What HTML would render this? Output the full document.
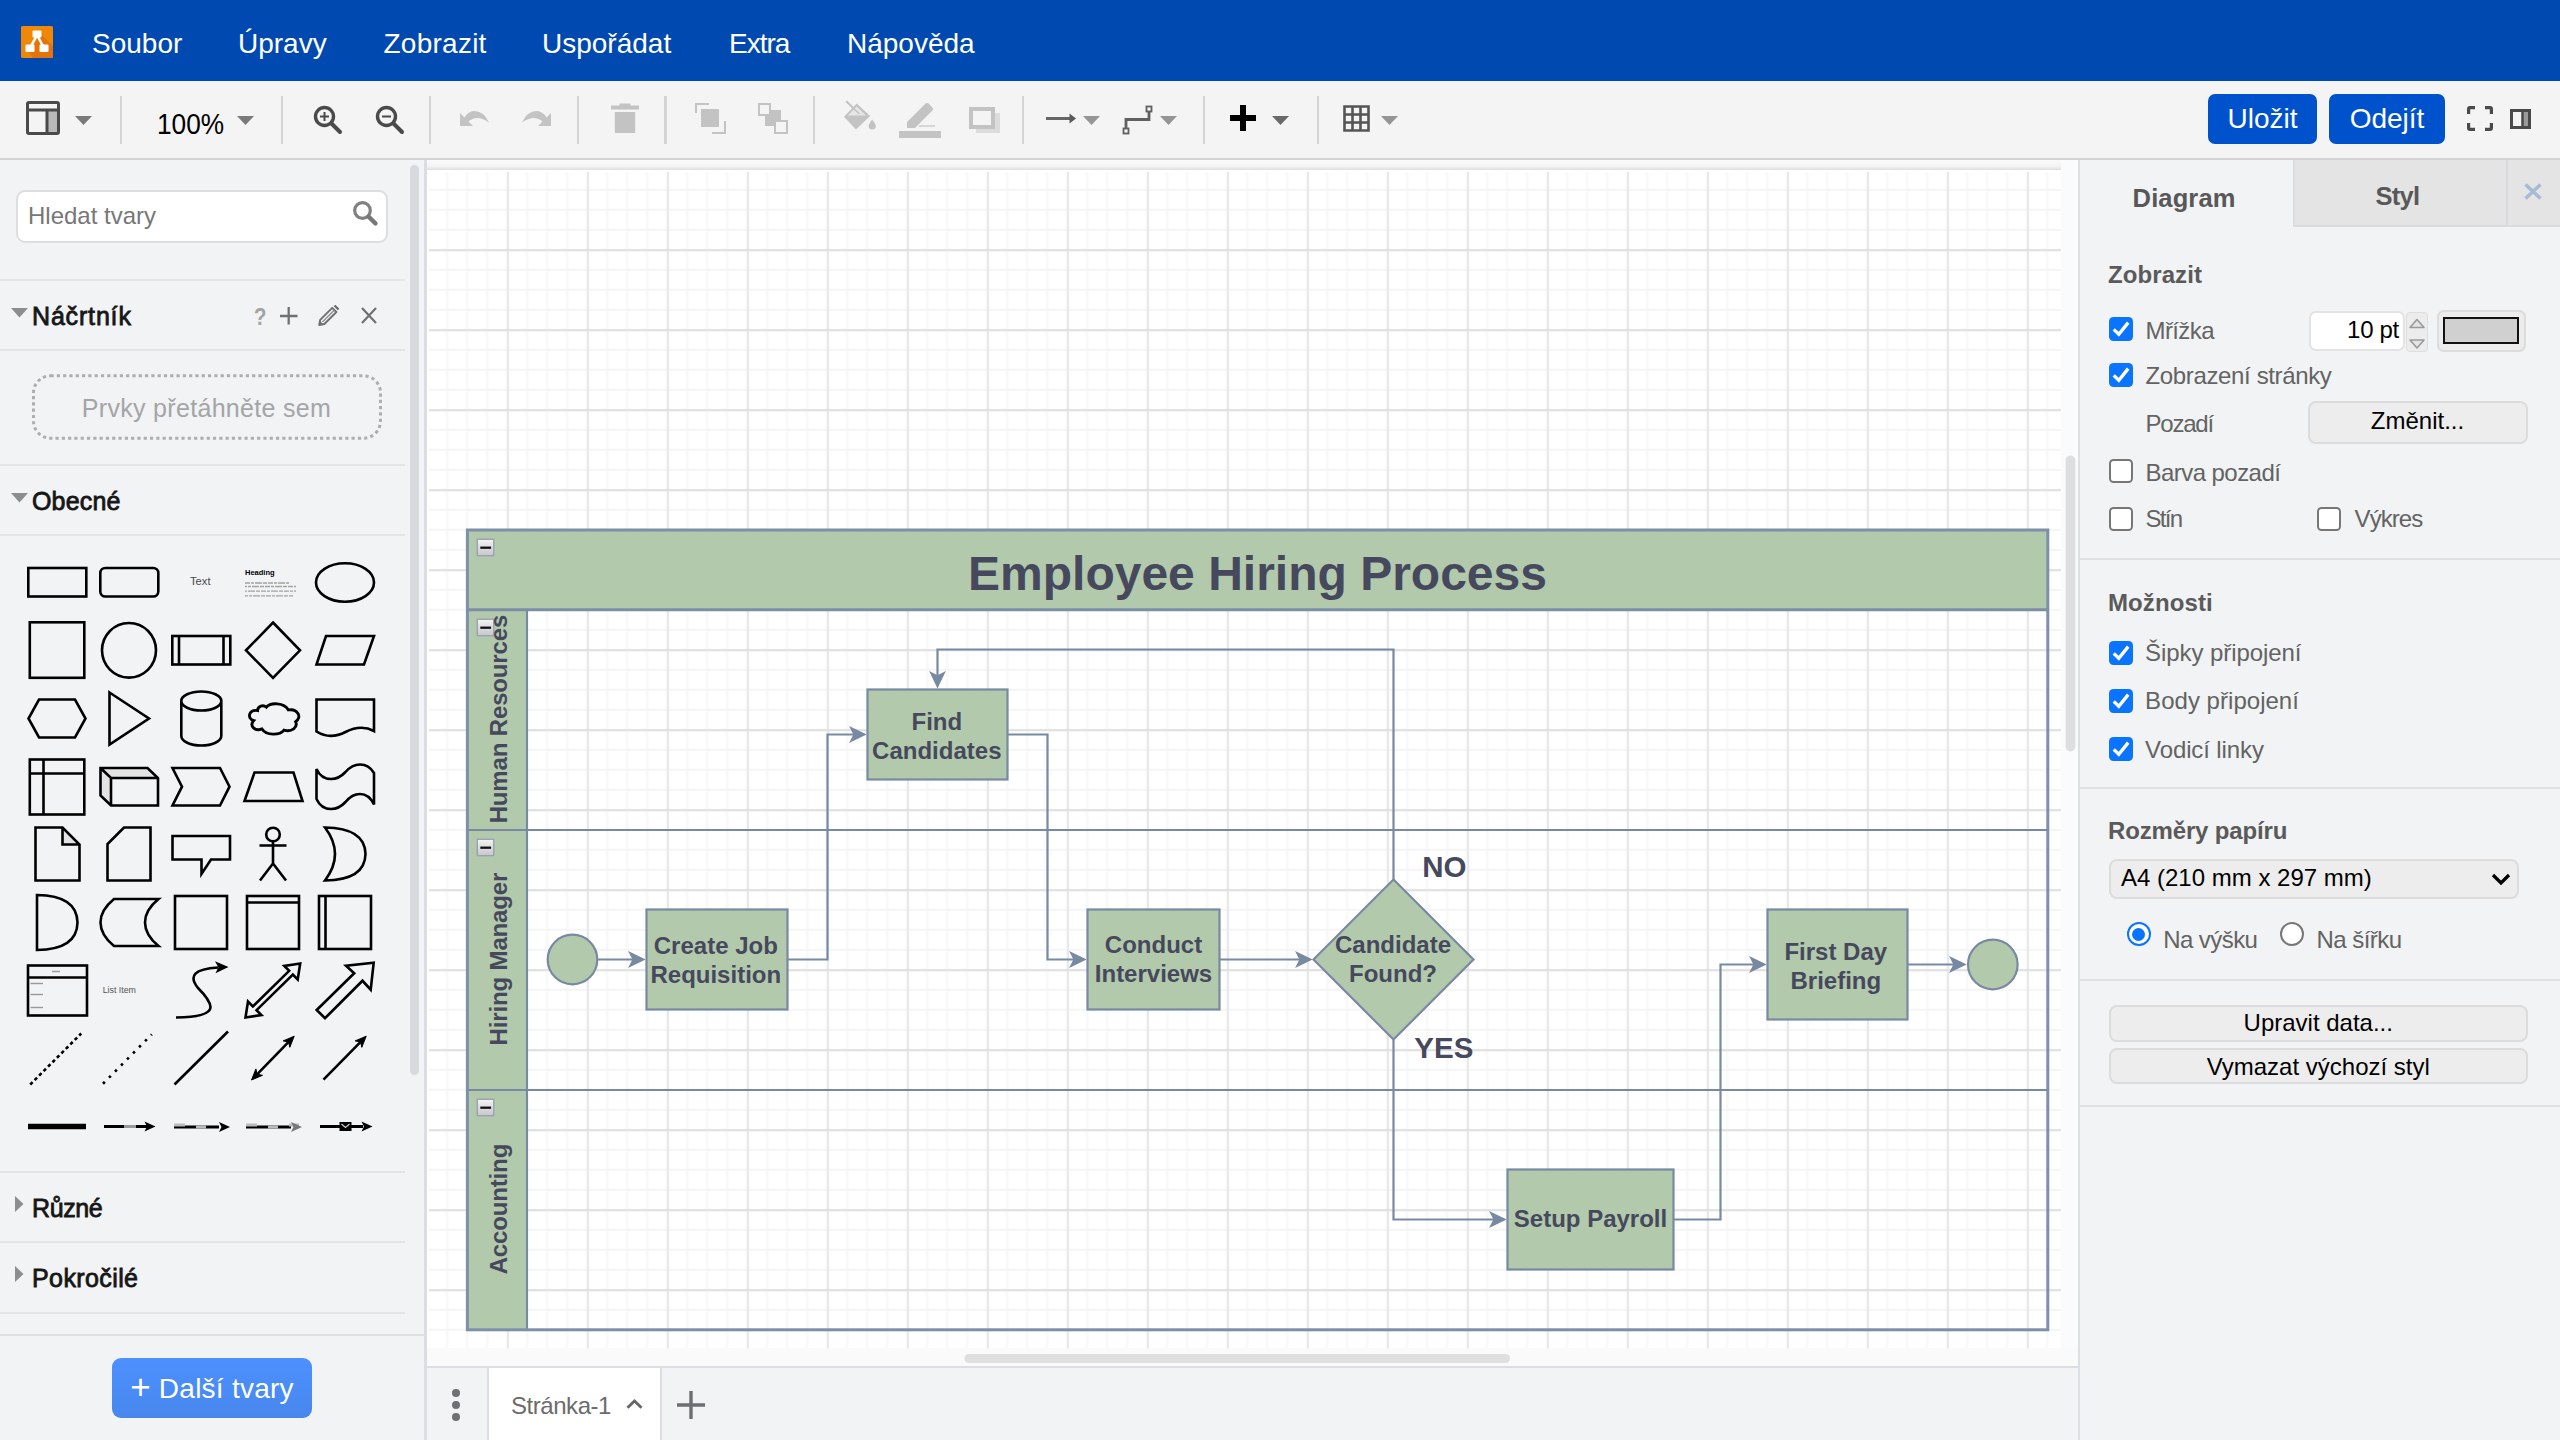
<!DOCTYPE html>
<html lang="cs"><head><meta charset="utf-8"><title>draw.io</title>
<style>
*{box-sizing:border-box;margin:0;padding:0}
html,body{width:2560px;height:1440px;overflow:hidden;background:#f1f3f4;font-family:"Liberation Sans",sans-serif;}
.abs{position:absolute}
#menubar{position:absolute;left:0;top:0;width:2560px;height:81px;background:#0049b0}
#menubar .mi{position:absolute;top:26.7px;font-size:28px;line-height:34px;color:#fff;white-space:nowrap}
#toolbar{position:absolute;left:0;top:81px;width:2560px;height:79px;background:#f4f4f4;border-bottom:2px solid #d2d2d2}
#toolbar .sep{position:absolute;top:15px;width:2px;height:48px;background:#d4d4d4}
#toolbar svg{position:absolute;overflow:visible}
.btn{position:absolute;top:13px;height:50px;border-radius:7px;background:#0052cc;color:#fff;font-size:28px;line-height:50px;text-align:center}
#sidebar{position:absolute;left:0;top:160px;width:424px;height:1280px;background:#f1f3f4;overflow:hidden}
#split{position:absolute;left:424px;top:160px;width:3px;height:1280px;background:#dcdde2}
#canvas{position:absolute;left:427px;top:160px;width:1651px;height:1207px;background:#fbfbfb;overflow:hidden}
#footer{position:absolute;left:427px;top:1366px;width:1651px;height:74px;background:#f1f3f4;border-top:2px solid #dcdee3}
#fsplit{position:absolute;left:2078px;top:160px;width:2px;height:1280px;background:#dcdfe4}
#format{position:absolute;left:2080px;top:160px;width:480px;height:1280px;background:#f1f3f4;overflow:hidden}
</style></head><body>
<div id="menubar">
<svg class="abs" style="left:21px;top:26px" width="32" height="32" viewBox="0 0 32 32">
<rect x="0" y="0" width="32" height="32" rx="1.5" fill="#f08705"/>
<path d="M20 8 L32 20 L32 30.5 Q32 32 30.5 32 L12 32 L8 26 Z" fill="#df6c0c" opacity=".75"/>
<path d="M16 9 L9 22 M16 9 L23 22" stroke="#fff" stroke-width="2.6" fill="none"/>
<rect x="11.5" y="4.5" width="9" height="7" rx="1" fill="#fff"/>
<rect x="4.5" y="18.5" width="9" height="7.5" rx="1" fill="#fff"/>
<rect x="18.5" y="18.5" width="9" height="7.5" rx="1" fill="#fff"/>
</svg>
<div class="mi" style="left:92px">Soubor</div>
<div class="mi" style="left:238px">Úpravy</div>
<div class="mi" style="left:383.5px;letter-spacing:.25px">Zobrazit</div>
<div class="mi" style="left:542px">Uspořádat</div>
<div class="mi" style="left:729px;letter-spacing:-1px">Extra</div>
<div class="mi" style="left:847px">Nápověda</div>
</div>
<div id="toolbar">
<!-- view icon -->
<svg style="left:26px;top:20px" width="34" height="34" viewBox="0 0 34 34"><rect x="21" y="9" width="11" height="23" fill="#b9b9b9"/><rect x="1.5" y="1.5" width="31" height="31" rx="1.5" fill="none" stroke="#4a4a4a" stroke-width="3"/><path d="M1.5 9 H32.5 M21 9 V32.5" stroke="#4a4a4a" stroke-width="3" fill="none"/></svg>
<svg style="left:75px;top:35px" width="17" height="9" viewBox="0 0 17 9"><path d="M0 0 H17 L8.5 9 Z" fill="#7a7a7a"/></svg>
<div class="sep" style="left:120px"></div>
<div class="abs" style="left:157px;top:25px;font-size:29px;line-height:36px;color:#000;transform:scaleX(.905);transform-origin:0 0">100%</div>
<svg style="left:237px;top:35px" width="17" height="9" viewBox="0 0 17 9"><path d="M0 0 H17 L8.5 9 Z" fill="#7a7a7a"/></svg>
<div class="sep" style="left:281px"></div>
<!-- zoom in -->
<svg style="left:313px;top:24px" width="29" height="29" viewBox="0 0 29 29"><circle cx="11.5" cy="11.5" r="9" fill="none" stroke="#4a4a4a" stroke-width="3.4"/><path d="M18.5 18.5 L27 27" stroke="#4a4a4a" stroke-width="4" stroke-linecap="round"/><path d="M7 11.5 H16 M11.5 7 V16" stroke="#4a4a4a" stroke-width="2"/></svg>
<!-- zoom out -->
<svg style="left:375px;top:24px" width="29" height="29" viewBox="0 0 29 29"><circle cx="11.5" cy="11.5" r="9" fill="none" stroke="#4a4a4a" stroke-width="3.4"/><path d="M18.5 18.5 L27 27" stroke="#4a4a4a" stroke-width="4" stroke-linecap="round"/><path d="M7 11.5 H16" stroke="#4a4a4a" stroke-width="2"/></svg>
<div class="sep" style="left:429px"></div>
<!-- undo -->
<svg style="left:460px;top:29px" width="30" height="17" viewBox="0 0 30 17"><path d="M0 3 V16 H13 L8.5 11.5 Q17 4 29 12.5 Q24 1 14 1 Q8 1.5 4.5 7.5 Z" fill="#c3c3c3"/></svg>
<!-- redo -->
<svg style="left:521px;top:29px" width="30" height="17" viewBox="0 0 30 17"><g transform="translate(30,0) scale(-1,1)"><path d="M0 3 V16 H13 L8.5 11.5 Q17 4 29 12.5 Q24 1 14 1 Q8 1.5 4.5 7.5 Z" fill="#c3c3c3"/></g></svg>
<div class="sep" style="left:577px"></div>
<!-- trash -->
<svg style="left:611px;top:22px" width="28" height="31" viewBox="0 0 28 31"><path d="M0 2.500 H8.500 V0.500 H19.500 V2.500 H28 V6.400 H0 Z M3.800 9 H24.200 V30 H3.800 Z" fill="#c3c3c3"/></svg>
<div class="sep" style="left:664px;width:3px"></div>
<!-- to front -->
<svg style="left:695px;top:22px" width="31" height="31" viewBox="0 0 31 31"><path d="M1 10 V1 H14 M17 30 H30 V18" fill="none" stroke="#c3c3c3" stroke-width="2"/><rect x="6" y="6" width="18" height="18" fill="#c3c3c3"/></svg>
<!-- to back -->
<svg style="left:758px;top:22px" width="30" height="31" viewBox="0 0 30 31"><rect x="7" y="7" width="16" height="16" fill="#c3c3c3"/><rect x="1" y="1" width="11" height="11" fill="#f4f4f4" stroke="#c3c3c3" stroke-width="2"/><rect x="17" y="18" width="12" height="12" fill="#f4f4f4" stroke="#c3c3c3" stroke-width="2"/></svg>
<div class="sep" style="left:813px"></div>
<!-- fill -->
<svg style="left:843px;top:20px" width="34" height="31" viewBox="0 0 34 31"><path d="M3.200 0.200 L15.100 11.500" stroke="#c3c3c3" stroke-width="2"/><path d="M13.700 2.400 L27.100 15 L13 28.400 L1 15.700 Z" fill="#c3c3c3"/><path d="M13.700 5.600 L23 14.400 H4.800 Z" fill="#ececec" opacity=".85"/><path d="M8.500 5.500 L16.500 13" stroke="#c3c3c3" stroke-width="1.600"/><path d="M29.200 18.500 Q32.800 23 32.800 25 A3.600 3.600 0 0 1 25.600 25 Q25.600 23 29.200 18.500 Z" fill="#c3c3c3"/></svg>
<!-- line color -->
<svg style="left:899px;top:20px" width="42" height="37" viewBox="0 0 42 37"><rect x="0" y="30" width="42" height="7" fill="#c3c3c3"/><path d="M8 27 V21 L26 3 Q28 1 30 3 L33 6 Q35 8 33 10 L16 27 Z" fill="#c3c3c3"/><path d="M20 25 H36" stroke="#d6d6d6" stroke-width="2"/></svg>
<!-- shadow -->
<svg style="left:969px;top:26px" width="31" height="26" viewBox="0 0 31 26"><rect x="7" y="6" width="24" height="20" fill="#dcdcdc"/><rect x="2" y="2" width="22" height="18" fill="#f4f4f4" stroke="#c3c3c3" stroke-width="4"/></svg>
<div class="sep" style="left:1022px"></div>
<!-- connection -->
<svg style="left:1046px;top:28px" width="30" height="18" viewBox="0 0 30 18"><path d="M0 9.500 H25" stroke="#666" stroke-width="3"/><path d="M23.500 4.500 L30 9.500 L23.500 14.500 Z" fill="#5a5a5a"/></svg>
<svg style="left:1083px;top:35px" width="17" height="9" viewBox="0 0 17 9"><path d="M0 0 H17 L8.5 9 Z" fill="#959595"/></svg>
<!-- waypoints -->
<svg style="left:1122px;top:24px" width="31" height="31" viewBox="0 0 31 31"><path d="M4 23 V14.500 H27 V7" fill="none" stroke="#606060" stroke-width="2.8"/><rect x="1.5" y="23.500" width="5" height="5" fill="#f4f4f4" stroke="#606060" stroke-width="1.8"/><rect x="24.5" y="1.500" width="5" height="5" fill="#f4f4f4" stroke="#606060" stroke-width="1.8"/></svg>
<svg style="left:1160px;top:35px" width="17" height="9" viewBox="0 0 17 9"><path d="M0 0 H17 L8.5 9 Z" fill="#959595"/></svg>
<div class="sep" style="left:1203px"></div>
<!-- plus -->
<svg style="left:1230px;top:24px" width="26" height="26" viewBox="0 0 26 26"><path d="M0 13 H26 M13 0 V26" stroke="#000" stroke-width="6"/></svg>
<svg style="left:1272px;top:35px" width="17" height="9" viewBox="0 0 17 9"><path d="M0 0 H17 L8.5 9 Z" fill="#6a6a6a"/></svg>
<div class="sep" style="left:1317px"></div>
<!-- table -->
<svg style="left:1343px;top:24px" width="27" height="27" viewBox="0 0 27 27"><path d="M1.500 1.500 H25.500 V25.500 H1.500 Z M1.500 9.500 H25.500 M1.500 17.500 H25.500 M9.500 1.500 V25.500 M17.500 1.500 V25.500" fill="none" stroke="#555" stroke-width="2.6"/></svg>
<svg style="left:1381px;top:35px" width="17" height="9" viewBox="0 0 17 9"><path d="M0 0 H17 L8.5 9 Z" fill="#959595"/></svg>
<!-- right buttons -->
<div class="btn" style="left:2208px;width:109px">Uložit</div>
<div class="btn" style="left:2329px;width:116px">Odejít</div>
<svg style="left:2467px;top:25px" width="26" height="25" viewBox="0 0 26 25"><path d="M1.600 8 V3 Q1.600 1.600 3 1.600 H8 M18 1.600 H23 Q24.400 1.600 24.400 3 V8 M24.400 17 V22 Q24.400 23.400 23 23.400 H18 M8 23.400 H3 Q1.600 23.400 1.600 22 V17" fill="none" stroke="#4a4a4a" stroke-width="3.200"/></svg>
<svg style="left:2510px;top:28px" width="21" height="20" viewBox="0 0 21 20"><rect x="12" y="1" width="8" height="18" fill="#9a9a9a"/><rect x="1.500" y="1.500" width="18" height="17" fill="none" stroke="#4a4a4a" stroke-width="3"/><path d="M12.500 1 V19" stroke="#4a4a4a" stroke-width="2.500"/></svg>
</div>
<div id="sidebar">
<div class="abs" style="left:410px;top:5px;width:9px;height:910px;border-radius:5px;background:#d8d9dc"></div>
<div class="abs" style="left:16px;top:30px;width:372px;height:53px;background:#fff;border:2px solid #dddee0;border-radius:9px"></div>
<div class="abs" style="left:28px;top:41px;font-size:24px;line-height:30px;color:#777;letter-spacing:0px">Hledat tvary</div>
<svg class="abs" style="left:352px;top:40px" width="27" height="27" viewBox="0 0 27 27"><circle cx="10.500" cy="10.500" r="7.800" fill="none" stroke="#808080" stroke-width="3.200"/><path d="M16.500 16.500 L23.500 23.500" stroke="#777" stroke-width="4.400" stroke-linecap="round"/></svg>
<div class="abs" style="left:0;top:119px;width:405px;height:2px;background:#e3e4e6"></div>
<svg class="abs" style="left:11px;top:148px" width="17" height="10" viewBox="0 0 17 10"><path d="M0 0 H17 L8.500 9.500 Z" fill="#8d8d8d"/></svg>
<div class="abs" style="left:32px;top:140px;font-size:25px;line-height:32px;color:#161616;-webkit-text-stroke:.8px #161616;letter-spacing:0.83px">Náčrtník</div>
<div class="abs" style="left:253px;top:140.500px;font-size:24px;line-height:32px;font-weight:bold;color:#a3a3a3;transform:scaleX(.85);transform-origin:50% 50%">?</div>
<svg class="abs" style="left:280px;top:147px" width="18" height="18" viewBox="0 0 18 18"><path d="M0 9 H17.500 M8.700 0 V17.500" stroke="#707070" stroke-width="2.300"/></svg>
<svg class="abs" style="left:317px;top:144px" width="23" height="23" viewBox="0 0 23 23"><path d="M2.200 21 L3.200 15.800 L15.200 3.800 L19.400 8 L7.400 20 Z" fill="none" stroke="#707070" stroke-width="1.900" stroke-linejoin="round"/><path d="M2.200 21 L3 17 L6.200 20.200 Z" fill="#707070"/><path d="M5.500 18 L17.300 6" stroke="#8a8a8a" stroke-width="1.300"/><path d="M16.800 2.300 L18.300 0.800 L22.300 4.800 L20.800 6.300 Z" fill="#666"/></svg>
<svg class="abs" style="left:361px;top:147px" width="16" height="17" viewBox="0 0 16 17"><path d="M1 1 L15 16 M15 1 L1 16" stroke="#707070" stroke-width="2.200"/></svg>
<div class="abs" style="left:0;top:189px;width:405px;height:2px;background:#e3e4e6"></div>
<svg class="abs" style="left:30px;top:212px" width="356" height="70" viewBox="0 0 356 70"><rect x="3.5" y="3.8" width="347" height="62.4" rx="17" fill="none" stroke="#aeaeb0" stroke-width="3" stroke-dasharray="3.2 3.1"/></svg>
<div class="abs" style="left:32px;top:232px;width:349px;text-align:center;font-size:25px;line-height:32px;color:#a4a5a7;letter-spacing:.31px">Prvky přetáhněte sem</div>
<div class="abs" style="left:0;top:304px;width:405px;height:2px;background:#e3e4e6"></div>
<svg class="abs" style="left:11px;top:333px" width="17" height="10" viewBox="0 0 17 10"><path d="M0 0 H17 L8.500 9.500 Z" fill="#8d8d8d"/></svg>
<div class="abs" style="left:32px;top:325px;font-size:25px;line-height:32px;color:#161616;-webkit-text-stroke:.8px #161616;letter-spacing:0.17px">Obecné</div>
<div class="abs" style="left:0;top:374px;width:405px;height:2px;background:#e3e4e6"></div>
<svg class="abs" style="left:21px;top:388px" width="72" height="68" viewBox="0 0 72 68"><rect x="7.3" y="20" width="58" height="28.500" stroke="#000" stroke-width="2.6" fill="none" stroke-linejoin="miter"/></svg>
<svg class="abs" style="left:93px;top:388px" width="72" height="68" viewBox="0 0 72 68"><rect x="7.300" y="20" width="58" height="28.500" rx="5" stroke="#000" stroke-width="2.6" fill="none" stroke-linejoin="miter"/></svg>
<svg class="abs" style="left:165px;top:388px" width="72" height="68" viewBox="0 0 72 68"><text x="35.300" y="37.400" font-size="11.200" text-anchor="middle" fill="#4a4a4a" font-family="Liberation Sans">Text</text></svg>
<svg class="abs" style="left:237px;top:388px" width="72" height="68" viewBox="0 0 72 68"><text x="8" y="27" font-size="7.500" font-weight="bold" fill="#000" font-family="Liberation Sans">Heading</text><g stroke="#a2a2a2" stroke-width="1.300" stroke-dasharray="5 1 3 1 7 1 4 1"><path d="M8 35 H52"/><path d="M8 38.500 H59" stroke-dashoffset="3"/><path d="M8 43.200 H59" stroke-dashoffset="7"/><path d="M8 47.800 H56" stroke-dashoffset="2"/></g></svg>
<svg class="abs" style="left:309px;top:388px" width="72" height="68" viewBox="0 0 72 68"><ellipse cx="36" cy="34.500" rx="29" ry="19.200" stroke="#000" stroke-width="2.6" fill="none" stroke-linejoin="miter"/></svg>
<svg class="abs" style="left:21px;top:456px" width="72" height="68" viewBox="0 0 72 68"><rect x="8.800" y="6.300" width="54.500" height="55.500" stroke="#000" stroke-width="2.6" fill="none" stroke-linejoin="miter"/></svg>
<svg class="abs" style="left:93px;top:456px" width="72" height="68" viewBox="0 0 72 68"><ellipse cx="36" cy="34.300" rx="27" ry="27.300" stroke="#000" stroke-width="2.6" fill="none" stroke-linejoin="miter"/></svg>
<svg class="abs" style="left:165px;top:456px" width="72" height="68" viewBox="0 0 72 68"><rect x="7.300" y="20" width="58" height="28.500" stroke="#000" stroke-width="2.6" fill="none" stroke-linejoin="miter"/><path d="M14 20 V48.500 M58.500 20 V48.500" stroke="#000" stroke-width="2.6" fill="none" stroke-linejoin="miter"/></svg>
<svg class="abs" style="left:237px;top:456px" width="72" height="68" viewBox="0 0 72 68"><path d="M36 6.500 L63 34.300 L36 62 L9 34.300 Z" stroke="#000" stroke-width="2.6" fill="none" stroke-linejoin="miter"/></svg>
<svg class="abs" style="left:309px;top:456px" width="72" height="68" viewBox="0 0 72 68"><path d="M17 20 H65 L55 48.500 H7.500 Z" stroke="#000" stroke-width="2.6" fill="none" stroke-linejoin="miter"/></svg>
<svg class="abs" style="left:21px;top:524px" width="72" height="68" viewBox="0 0 72 68"><path d="M18 15.500 H54 L64.500 34.500 L54 53.500 H18 L7.500 34.500 Z" stroke="#000" stroke-width="2.6" fill="none" stroke-linejoin="miter"/></svg>
<svg class="abs" style="left:93px;top:524px" width="72" height="68" viewBox="0 0 72 68"><path d="M16.500 8.500 L56 34.500 L16.500 60.500 Z" stroke="#000" stroke-width="2.6" fill="none" stroke-linejoin="miter"/></svg>
<svg class="abs" style="left:165px;top:524px" width="72" height="68" viewBox="0 0 72 68"><path d="M16.300 17 V52 A20 9.500 0 0 0 56.300 52 V17 A20 9.500 0 0 0 16.300 17 A20 9.500 0 0 0 56.300 17" stroke="#000" stroke-width="2.6" fill="none" stroke-linejoin="miter"/></svg>
<svg class="abs" style="left:237px;top:524px" width="72" height="68" viewBox="0 0 72 68"><path transform="translate(36,35) scale(1.1,1.12) translate(-36,-34.6)" d="M22 27 C14 26 12 34 18.500 36 C14 41 20 46 26 43.500 C30 49.500 42 49.500 46 44.500 C53 46.500 59 42 56.500 37 C63 33 58 25 50 26.500 C46 20 34 19.500 30 24 C27 21.500 22 23 22 27 Z" stroke="#000" stroke-width="2.6" fill="none" stroke-linejoin="miter"/></svg>
<svg class="abs" style="left:309px;top:524px" width="72" height="68" viewBox="0 0 72 68"><path d="M7.500 15.500 H65 V47 Q52 40 36.500 48 Q21 56 7.500 47.500 Z" stroke="#000" stroke-width="2.6" fill="none" stroke-linejoin="miter"/></svg>
<svg class="abs" style="left:21px;top:592px" width="72" height="68" viewBox="0 0 72 68"><rect x="8.800" y="7.500" width="54.500" height="55" stroke="#000" stroke-width="2.6" fill="none" stroke-linejoin="miter"/><path d="M22.500 7.500 V62.500 M8.800 21.500 H63.300" stroke="#000" stroke-width="2.6" fill="none" stroke-linejoin="miter"/></svg>
<svg class="abs" style="left:93px;top:592px" width="72" height="68" viewBox="0 0 72 68"><path d="M7.500 16 H54.500 L65 26 V53.500 H18 L7.500 43.500 Z" fill="#e3e3e3" stroke="none"/><rect x="18" y="26" width="47" height="27.500" fill="#f1f3f4"/><path d="M7.500 16 H54.500 L65 26 V53.500 H18 L7.500 43.500 Z M7.500 16 L18 26 H65 M18 26 V53.500" stroke="#000" stroke-width="2.6" fill="none" stroke-linejoin="miter"/></svg>
<svg class="abs" style="left:165px;top:592px" width="72" height="68" viewBox="0 0 72 68"><path d="M7.500 16 H55 L64.500 34.700 L55 53.500 H7.500 L17 34.700 Z" stroke="#000" stroke-width="2.6" fill="none" stroke-linejoin="miter"/></svg>
<svg class="abs" style="left:237px;top:592px" width="72" height="68" viewBox="0 0 72 68"><path d="M17.500 20.500 H56.500 L65.500 49 H7.500 Z" stroke="#000" stroke-width="2.6" fill="none" stroke-linejoin="miter"/></svg>
<svg class="abs" style="left:309px;top:592px" width="72" height="68" viewBox="0 0 72 68"><path d="M7.500 17 Q12 27 22 27 Q30 27 36.500 20 Q43 12.500 51 12.500 Q60 12.500 65 21 V52.500 Q60 42 51 42 Q43 42 36.500 50 Q30 57 22 57 Q12 57 7.500 47 Z" stroke="#000" stroke-width="2.6" fill="none" stroke-linejoin="miter"/></svg>
<svg class="abs" style="left:21px;top:660px" width="72" height="68" viewBox="0 0 72 68"><path d="M41.500 7.500 L58.500 24.500 H41.500 Z" fill="#e3e3e3" stroke="none"/><path d="M14.500 7.500 H41.500 L58.500 24.500 V60.500 H14.500 Z M41.500 7.500 V24.500 H58.500" stroke="#000" stroke-width="2.6" fill="none" stroke-linejoin="miter"/></svg>
<svg class="abs" style="left:93px;top:660px" width="72" height="68" viewBox="0 0 72 68"><path d="M31 7.500 H57.500 V60.500 H14.500 V24 Z" stroke="#000" stroke-width="2.6" fill="none" stroke-linejoin="miter"/></svg>
<svg class="abs" style="left:165px;top:660px" width="72" height="68" viewBox="0 0 72 68"><path d="M7.500 16 H65 V39.500 H46 L36.500 54 V39.500 H7.500 Z" stroke="#000" stroke-width="2.6" fill="none" stroke-linejoin="miter"/></svg>
<svg class="abs" style="left:237px;top:660px" width="72" height="68" viewBox="0 0 72 68"><circle cx="36" cy="14.500" r="6.800" stroke="#000" stroke-width="2.6" fill="none" stroke-linejoin="miter"/><path d="M36 21.300 V43.500 M22.500 25.500 H49.500 M36 43.500 L23 60.500 M36 43.500 L49 60.500" stroke="#000" stroke-width="2.6" fill="none" stroke-linejoin="miter"/></svg>
<svg class="abs" style="left:309px;top:660px" width="72" height="68" viewBox="0 0 72 68"><path d="M16 7.500 Q56 8 56.500 34 Q56 60 16 60.500 Q36 34 16 7.500 Z" stroke="#000" stroke-width="2.6" fill="none" stroke-linejoin="miter"/></svg>
<svg class="abs" style="left:21px;top:728px" width="72" height="68" viewBox="0 0 72 68"><path d="M16 7 Q56 7.500 56.500 34.500 Q56 61.500 16 62 Z" stroke="#000" stroke-width="2.6" fill="none" stroke-linejoin="miter"/></svg>
<svg class="abs" style="left:93px;top:728px" width="72" height="68" viewBox="0 0 72 68"><path d="M21 11 H65.500 Q52 22 52 34.500 Q52 47 65.500 58 H21 Q7.500 47 7.500 34.500 Q7.500 22 21 11 Z" stroke="#000" stroke-width="2.6" fill="none" stroke-linejoin="miter"/></svg>
<svg class="abs" style="left:165px;top:728px" width="72" height="68" viewBox="0 0 72 68"><rect x="10" y="8" width="52" height="53" stroke="#000" stroke-width="2.6" fill="none" stroke-linejoin="miter" stroke-width="3"/></svg>
<svg class="abs" style="left:237px;top:728px" width="72" height="68" viewBox="0 0 72 68"><rect x="10" y="8" width="52" height="53" stroke="#000" stroke-width="2.6" fill="none" stroke-linejoin="miter" stroke-width="3"/><path d="M10 14.500 H62" stroke="#000" stroke-width="2.6" fill="none" stroke-linejoin="miter"/></svg>
<svg class="abs" style="left:309px;top:728px" width="72" height="68" viewBox="0 0 72 68"><rect x="10" y="8" width="52" height="53" stroke="#000" stroke-width="2.6" fill="none" stroke-linejoin="miter" stroke-width="3"/><path d="M16.500 8 V61" stroke="#000" stroke-width="2.6" fill="none" stroke-linejoin="miter"/></svg>
<svg class="abs" style="left:21px;top:796px" width="72" height="68" viewBox="0 0 72 68"><rect x="7" y="9.500" width="59" height="50" stroke="#000" stroke-width="2.6" fill="none" stroke-linejoin="miter" stroke-width="3"/><path d="M7 21.500 H66" stroke="#000" stroke-width="2.6" fill="none" stroke-linejoin="miter" stroke-width="3"/><g stroke="#999" stroke-width="1.400"><path d="M31 15.500 H39"/><path d="M9.500 27.500 H22"/><path d="M9.500 38.500 H22"/><path d="M9.500 51.500 H22"/></g></svg>
<svg class="abs" style="left:93px;top:796px" width="72" height="68" viewBox="0 0 72 68"><text x="26.300" y="37.300" font-size="8.800" text-anchor="middle" fill="#555" font-family="Liberation Sans">List Item</text></svg>
<svg class="abs" style="left:165px;top:796px" width="72" height="68" viewBox="0 0 72 68"><path d="M11 61.500 Q45.500 61 45.500 51 Q45 44 33 32 Q18 13.500 53 11.500" stroke="#000" stroke-width="2.6" fill="none" stroke-linejoin="miter"/><path d="M63.500 11 L50 5.300 L53.300 11.300 L50.500 17.300 Z" fill="#000"/></svg>
<svg class="abs" style="left:237px;top:796px" width="72" height="68" viewBox="0 0 72 68"><path d="M63.200 7.500 L60.700 23.400 L55.840 18.540 L19.540 54.140 L24.400 59 L8.500 61.500 L11 45.600 L15.860 50.460 L52.160 14.860 L47.300 10 Z" stroke="#000" stroke-width="2.6" fill="none" stroke-linejoin="miter"/></svg>
<svg class="abs" style="left:309px;top:796px" width="72" height="68" viewBox="0 0 72 68"><path d="M7.700 54 L45.200 17.250 L37 9.750 L64.700 6.750 L61.700 33.750 L53.500 24.750 L16 62.250 Z" stroke="#000" stroke-width="2.6" fill="none" stroke-linejoin="miter"/></svg>
<svg class="abs" style="left:21px;top:864px" width="72" height="68" viewBox="0 0 72 68"><path d="M9.200 60.500 L60.200 9.500" stroke="#000" stroke-width="2.6" fill="none" stroke-linejoin="miter" stroke-width="3" stroke-dasharray="3.400 2.900"/></svg>
<svg class="abs" style="left:93px;top:864px" width="72" height="68" viewBox="0 0 72 68"><path d="M10 59.750 L58.800 10.300" stroke="#000" stroke-width="2.6" fill="none" stroke-linejoin="miter" stroke-width="2.800" stroke-dasharray="2.600 5.950"/></svg>
<svg class="abs" style="left:165px;top:864px" width="72" height="68" viewBox="0 0 72 68"><path d="M9.500 60.500 L63 7.500" stroke="#000" stroke-width="2.6" fill="none" stroke-linejoin="miter"/></svg>
<svg class="abs" style="left:237px;top:864px" width="72" height="68" viewBox="0 0 72 68"><path d="M20.100 50.300 L51.600 17.900" stroke="#000" stroke-width="2.6" fill="none" stroke-linejoin="miter"/><path d="M14.500 56 L18.900 44.900 L20.100 50.300 L25.500 51.300 Z M57.200 12.200 L52.800 23.300 L51.600 17.900 L46.200 16.900 Z" fill="#000" stroke="#000" stroke-width="1"/></svg>
<svg class="abs" style="left:309px;top:864px" width="72" height="68" viewBox="0 0 72 68"><path d="M14.500 55.700 L51.600 17.900" stroke="#000" stroke-width="2.6" fill="none" stroke-linejoin="miter"/><path d="M57.200 12.200 L52.800 23.300 L51.600 17.900 L46.200 16.900 Z" fill="#000" stroke="#000" stroke-width="1"/></svg>
<svg class="abs" style="left:21px;top:932px" width="72" height="68" viewBox="0 0 72 68"><path d="M7 34.500 H65" stroke="#000" stroke-width="5.500"/></svg>
<svg class="abs" style="left:93px;top:932px" width="72" height="68" viewBox="0 0 72 68"><path d="M11 34.500 H54" stroke="#000" stroke-width="2.800"/><path d="M31 34.500 H43" stroke="#999" stroke-width="3"/><path d="M62.500 34.500 L51.500 29.500 L54 34.500 L51.500 39.500 Z" fill="#000"/></svg>
<svg class="abs" style="left:165px;top:932px" width="72" height="68" viewBox="0 0 72 68"><path d="M9 35 H54" stroke="#000" stroke-width="2.800"/><path d="M9 33 H20 M31 35 H41" stroke="#bbb" stroke-width="3"/><path d="M65 35 L54 30 L56.500 35 L54 40 Z" fill="#000"/></svg>
<svg class="abs" style="left:237px;top:932px" width="72" height="68" viewBox="0 0 72 68"><path d="M9 35 H54" stroke="#000" stroke-width="2.800"/><path d="M9 33 H20 M31 35 H41 M52 33 H62" stroke="#bbb" stroke-width="3"/><path d="M65 35 L54 30 L56.500 35 L54 40 Z" fill="#777"/></svg>
<svg class="abs" style="left:309px;top:932px" width="72" height="68" viewBox="0 0 72 68"><path d="M11 34.500 H54" stroke="#000" stroke-width="2.800"/><rect x="30.500" y="30" width="12" height="9" fill="#000"/><path d="M32.500 32 L36.500 35.500 L40.500 32" stroke="#ccc" stroke-width="1.200" fill="none"/><path d="M63.500 34.500 L52.500 29.500 L55 34.500 L52.500 39.500 Z" fill="#000"/></svg>
<div class="abs" style="left:0;top:1011px;width:405px;height:2px;background:#e3e4e6"></div>
<svg class="abs" style="left:15px;top:1036px" width="9" height="16" viewBox="0 0 9 16"><path d="M0 0 L8.500 8 L0 16 Z" fill="#8d8d8d"/></svg>
<div class="abs" style="left:32px;top:1032px;font-size:25px;line-height:32px;color:#161616;-webkit-text-stroke:.8px #161616;letter-spacing:-0.4px">Různé</div>
<div class="abs" style="left:0;top:1081px;width:405px;height:2px;background:#e3e4e6"></div>
<svg class="abs" style="left:15px;top:1106px" width="9" height="16" viewBox="0 0 9 16"><path d="M0 0 L8.500 8 L0 16 Z" fill="#8d8d8d"/></svg>
<div class="abs" style="left:32px;top:1102px;font-size:25px;line-height:32px;color:#161616;-webkit-text-stroke:.8px #161616;letter-spacing:0.4px">Pokročilé</div>
<div class="abs" style="left:0;top:1152px;width:405px;height:2px;background:#e3e4e6"></div>
<div class="abs" style="left:0;top:1174px;width:424px;height:2px;background:#dddfe2"></div>
<div class="abs" style="left:112px;top:1198px;width:200px;height:60px;border-radius:9px;background:linear-gradient(#4d90fe,#4787ed);color:#fff;font-size:28px;line-height:55px;text-align:center;white-space:nowrap;letter-spacing:.25px"><span style="font-size:35px;position:relative;top:1px">+</span> Další tvary</div>
</div>
<div id="split"></div>
<div id="canvas">
<svg class="abs" style="left:-427px;top:-160px" width="2560" height="1440" viewBox="0 0 2560 1440" font-family="Liberation Sans, sans-serif">
<defs>
<pattern id="gmin" x="445" y="188" width="20" height="20" patternUnits="userSpaceOnUse"><path d="M2.2 0 V20" stroke="#f9f9f9" stroke-width="3" fill="none"/><path d="M0 1.8 H20" stroke="#f5f5f5" stroke-width="2" fill="none"/></pattern>
<pattern id="gmaj" x="506" y="248" width="80" height="80" patternUnits="userSpaceOnUse"><path d="M2.1 0 V80" stroke="#e8e8e8" stroke-width="2" fill="none"/><path d="M0 2.3 H80" stroke="#e0e0e0" stroke-width="2" fill="none"/></pattern>
<linearGradient id="pshadow" x1="0" y1="0" x2="0" y2="1"><stop offset="0" stop-color="#fbfbfb"/><stop offset=".6" stop-color="#f4f4f4"/><stop offset="1" stop-color="#dedede"/></linearGradient>
<linearGradient id="colg" x1="0" y1="0" x2="0" y2="1"><stop offset="0" stop-color="#f4f4f4"/><stop offset="1" stop-color="#c6c6cb"/></linearGradient>
</defs>
<rect x="427" y="160" width="1634" height="10" fill="url(#pshadow)"/>
<rect x="427" y="170" width="1634" height="1178.5" fill="#fff"/>
<rect x="429" y="172" width="1632" height="1176.5" fill="url(#gmin)"/>
<rect x="429" y="172" width="1632" height="1176.5" fill="url(#gmaj)"/>
<g stroke="#788aa3" stroke-width="2" fill="#b2c9ab">
<rect x="467.5" y="530" width="1580" height="79.5" stroke="none"/>
<rect x="467.5" y="609.5" width="59.5" height="720" stroke="none"/>
<path d="M527 609.5 V1329.5 M467.5 830 H2047.5 M467.5 1090 H2047.5" fill="none" stroke-width="2.1"/>
<path d="M467.5 609.7 H2047.5" fill="none" stroke-width="2.9" stroke="#7c8ea7"/>
<rect x="467.4" y="530" width="1580.4" height="799.8" fill="none" stroke-width="3" stroke="#7e90a9"/>
</g>
<rect x="477.3" y="539.3" width="16.4" height="16.4" fill="url(#colg)" stroke="#98a0b2" stroke-width="1.3"/><path d="M480.3 547.6999999999999 H491.1" stroke="#111" stroke-width="2.3"/>
<rect x="477.3" y="619.3" width="16.4" height="16.4" fill="url(#colg)" stroke="#98a0b2" stroke-width="1.3"/><path d="M480.3 627.6999999999999 H491.1" stroke="#111" stroke-width="2.3"/>
<rect x="477.3" y="839.3" width="16.4" height="16.4" fill="url(#colg)" stroke="#98a0b2" stroke-width="1.3"/><path d="M480.3 847.6999999999999 H491.1" stroke="#111" stroke-width="2.3"/>
<rect x="477.3" y="1099.3" width="16.4" height="16.4" fill="url(#colg)" stroke="#98a0b2" stroke-width="1.3"/><path d="M480.3 1107.7 H491.1" stroke="#111" stroke-width="2.3"/>
<path d="M597.5 959.5 L634.5 959.5" fill="none" stroke="#788aa3" stroke-width="2.2" stroke-linejoin="miter"/>
<path d="M643.3 959.5 L630.3 953.3 L633.5 959.5 L630.3 965.7 Z" fill="#788aa3" stroke="#788aa3" stroke-width="2" stroke-linejoin="miter"/>
<path d="M787.5 959.5 L827.5 959.5 L827.5 734.5 L855.5 734.5" fill="none" stroke="#788aa3" stroke-width="2.2" stroke-linejoin="miter"/>
<path d="M864.3 734.5 L851.3 728.3 L854.5 734.5 L851.3 740.7 Z" fill="#788aa3" stroke="#788aa3" stroke-width="2" stroke-linejoin="miter"/>
<path d="M1007.5 734.5 L1047.5 734.5 L1047.5 959.5 L1075.5 959.5" fill="none" stroke="#788aa3" stroke-width="2.2" stroke-linejoin="miter"/>
<path d="M1084.3 959.5 L1071.3 953.3 L1074.5 959.5 L1071.3 965.7 Z" fill="#788aa3" stroke="#788aa3" stroke-width="2" stroke-linejoin="miter"/>
<path d="M1219.5 959.5 L1301.5 959.5" fill="none" stroke="#788aa3" stroke-width="2.2" stroke-linejoin="miter"/>
<path d="M1310.3 959.5 L1297.3 953.3 L1300.5 959.5 L1297.3 965.7 Z" fill="#788aa3" stroke="#788aa3" stroke-width="2" stroke-linejoin="miter"/>
<path d="M1393.5 879.5 L1393.5 649.5 L937.5 649.5 L937.5 677.5" fill="none" stroke="#788aa3" stroke-width="2.2" stroke-linejoin="miter"/>
<path d="M937.5 686.3 L931.3 673.3 L937.5 676.5 L943.7 673.3 Z" fill="#788aa3" stroke="#788aa3" stroke-width="2" stroke-linejoin="miter"/>
<path d="M1393.5 1039.5 L1393.5 1219.5 L1495.5 1219.5" fill="none" stroke="#788aa3" stroke-width="2.2" stroke-linejoin="miter"/>
<path d="M1504.3 1219.5 L1491.3 1213.3 L1494.5 1219.5 L1491.3 1225.7 Z" fill="#788aa3" stroke="#788aa3" stroke-width="2" stroke-linejoin="miter"/>
<path d="M1673.5 1219.5 L1720.5 1219.5 L1720.5 964.5 L1755.5 964.5" fill="none" stroke="#788aa3" stroke-width="2.2" stroke-linejoin="miter"/>
<path d="M1764.3 964.5 L1751.3 958.3 L1754.5 964.5 L1751.3 970.7 Z" fill="#788aa3" stroke="#788aa3" stroke-width="2" stroke-linejoin="miter"/>
<path d="M1907.5 964.5 L1955.5 964.5" fill="none" stroke="#788aa3" stroke-width="2.2" stroke-linejoin="miter"/>
<path d="M1964.3 964.5 L1951.3 958.3 L1954.5 964.5 L1951.3 970.7 Z" fill="#788aa3" stroke="#788aa3" stroke-width="2" stroke-linejoin="miter"/>
<g stroke="#788aa3" stroke-width="2.2" fill="#b2c9ab">
<circle cx="572.5" cy="959.5" r="24.8"/>
<rect x="646.5" y="909.5" width="141" height="100"/>
<rect x="867.5" y="689.5" width="140" height="90"/>
<rect x="1087.5" y="909.5" width="132" height="100"/>
<path d="M1393.5 879.5 L1473.5 959.5 L1393.5 1039.5 L1313.5 959.5 Z"/>
<rect x="1507.5" y="1169.5" width="166" height="100"/>
<rect x="1767.5" y="909.5" width="140" height="110"/>
<circle cx="1992.8" cy="964.5" r="24.8"/>
</g>
<g fill="#46495d" font-weight="bold" text-anchor="middle">
<text x="1257.5" y="590" font-size="48">Employee Hiring Process</text>
<text transform="translate(506.6,719.1) rotate(-90)" font-size="24" letter-spacing="-0.15">Human Resources</text>
<text transform="translate(506.6,959.1) rotate(-90)" font-size="24" letter-spacing="-0.15">Hiring Manager</text>
<text transform="translate(506.6,1209.1) rotate(-90)" font-size="24" letter-spacing="-0.15">Accounting</text>
<text x="936.8" y="729.5" font-size="24">Find</text>
<text x="936.8" y="758.5" font-size="24">Candidates</text>
<text x="715.8" y="953.8" font-size="24">Create Job</text>
<text x="715.8" y="982.8" font-size="24">Requisition</text>
<text x="1153.5" y="953.3" font-size="24">Conduct</text>
<text x="1153.5" y="982.3" font-size="24">Interviews</text>
<text x="1393" y="953.3" font-size="24">Candidate</text>
<text x="1393" y="982.3" font-size="24">Found?</text>
<text x="1835.8" y="960" font-size="24">First Day</text>
<text x="1835.8" y="989" font-size="24">Briefing</text>
<text x="1590.5" y="1227.3" font-size="24">Setup Payroll</text>
<text x="1444.3" y="877.4" font-size="29.5">NO</text>
<text x="1443.8" y="1058.4" font-size="29.5">YES</text>
</g>
<rect x="2061" y="160" width="17" height="1207" fill="#fbfbfb"/>
<rect x="427" y="1348.5" width="1651" height="18.5" fill="#fafafa"/>
<rect x="2065.6" y="455.5" width="9.8" height="296" rx="4.9" fill="#dedede"/>
<rect x="964.4" y="1353.9" width="545.6" height="9.2" rx="4.6" fill="#dfdfdf"/>
</svg>
</div>
<div id="footer">
<div class="abs" style="left:25px;top:20.5px;width:8px;height:8px;border-radius:4px;background:#6f7073"></div>
<div class="abs" style="left:25px;top:32.7px;width:8px;height:8px;border-radius:4px;background:#6f7073"></div>
<div class="abs" style="left:25px;top:44.9px;width:8px;height:8px;border-radius:4px;background:#6f7073"></div>
<div class="abs" style="left:60px;top:0;width:175px;height:72px;background:#fff;border-left:2px solid #dcdee3;border-right:2px solid #dcdee3"></div>
<div class="abs" style="left:84px;top:23.300px;font-size:24px;line-height:30px;color:#6b6b6b;letter-spacing:-.45px">Stránka-1</div>
<svg class="abs" style="left:199px;top:31px" width="17" height="10" viewBox="0 0 17 10"><path d="M1.500 8.800 L8.500 2 L15.500 8.800" fill="none" stroke="#666" stroke-width="2.800"/></svg>
<svg class="abs" style="left:250px;top:23px" width="28" height="28" viewBox="0 0 28 28"><path d="M0 14 H28 M14 0 V28" stroke="#6d6e72" stroke-width="3.400"/></svg>
</div>
<div id="fsplit"></div>
<div id="format">
<div class="abs" style="left:213px;top:0;width:267px;height:67px;background:#e4e4e4;border-bottom:2px solid #dadbdd;border-left:2px solid #dcdcde"></div>
<div class="abs" style="left:426px;top:0;width:2px;height:65px;background:#d9dade"></div>
<div class="abs" style="left:52.600000000000094px;top:21.80000000000001px;font-size:25.5px;line-height:32px;font-weight:bold;color:#585858;white-space:nowrap;letter-spacing:0.12px">Diagram</div>
<div class="abs" style="left:295.5px;top:20.19999999999999px;font-size:25.5px;line-height:32px;font-weight:bold;color:#585858;white-space:nowrap;letter-spacing:-0.73px">Styl</div>
<svg class="abs" style="left:444px;top:23px" width="18" height="17" viewBox="0 0 18 17"><path d="M1.500 1.500 L16.500 15.500 M16.500 1.500 L1.500 15.500" stroke="#a9bad3" stroke-width="3.600"/></svg>
<div class="abs" style="left:28px;top:99.2px;font-size:24px;line-height:32px;font-weight:bold;color:#5a5a5a;white-space:nowrap;letter-spacing:0.08px">Zobrazit</div>
<div class="abs" style="left:28.699999999999818px;top:156.8px;width:24px;height:24px;border-radius:4.500px;background:#0b74ff"></div><svg class="abs" style="left:28.699999999999818px;top:156.8px" width="24" height="24" viewBox="0 0 24 24"><path d="M4.700 12.400 L9.800 17.300 L19.200 5.600" fill="none" stroke="#fff" stroke-width="3.300"/></svg>
<div class="abs" style="left:65.5px;top:154.8px;font-size:24px;line-height:32px;color:#636363;white-space:nowrap;letter-spacing:-0.60px">Mřížka</div>
<div class="abs" style="left:229px;top:151px;width:96px;height:40px;background:#fff;border:2px solid #e3e3e3;border-radius:7px"></div>
<div class="abs" style="left:229px;top:154.0px;width:90px;text-align:right;font-size:24px;line-height:32px;color:#000;letter-spacing:-.3px">10 pt</div>
<div class="abs" style="left:326px;top:152px;width:22px;height:40px;background:#ececec;border:1.500px solid #dedede;border-radius:4px"></div>
<svg class="abs" style="left:326px;top:152px" width="22" height="40" viewBox="0 0 22 40"><path d="M4 15.500 L11 7.500 L18 15.500 Z M4 28 L11 36 L18 28 Z" fill="#e4e4e4" stroke="#9a9a9a" stroke-width="1.600" stroke-linejoin="round"/></svg>
<div class="abs" style="left:357px;top:149.5px;width:89px;height:42px;background:#ececec;border:2px solid #dcdcdc;border-radius:7px"></div>
<div class="abs" style="left:363px;top:157px;width:76px;height:27px;background:#d0d0d0;border:2px solid #111"></div>
<div class="abs" style="left:28.699999999999818px;top:202.7px;width:24px;height:24px;border-radius:4.500px;background:#0b74ff"></div><svg class="abs" style="left:28.699999999999818px;top:202.7px" width="24" height="24" viewBox="0 0 24 24"><path d="M4.700 12.400 L9.800 17.300 L19.200 5.600" fill="none" stroke="#fff" stroke-width="3.300"/></svg>
<div class="abs" style="left:65.5px;top:199.5px;font-size:24px;line-height:32px;color:#636363;white-space:nowrap;letter-spacing:-0.36px">Zobrazení stránky</div>
<div class="abs" style="left:65.5px;top:247.60000000000002px;font-size:24px;line-height:32px;color:#636363;white-space:nowrap;letter-spacing:-1.23px">Pozadí</div>
<div class="abs" style="left:227.5px;top:240.7px;width:220px;height:43px;background:#ededed;border:2px solid #dcdcdc;border-radius:8px"></div><div class="abs" style="left:227.5px;top:245.3px;width:220px;text-align:center;font-size:24px;line-height:32px;color:#000;white-space:nowrap">Změnit...</div>
<div class="abs" style="left:28.699999999999818px;top:299px;width:24px;height:24px;border-radius:4.500px;background:#fff;border:2.400px solid #777"></div>
<div class="abs" style="left:65.5px;top:297.2px;font-size:24px;line-height:32px;color:#636363;white-space:nowrap;letter-spacing:-0.55px">Barva pozadí</div>
<div class="abs" style="left:28.699999999999818px;top:347px;width:24px;height:24px;border-radius:4.500px;background:#fff;border:2.400px solid #777"></div>
<div class="abs" style="left:65.5px;top:343.3px;font-size:24px;line-height:32px;color:#636363;white-space:nowrap;letter-spacing:-1.71px">Stín</div>
<div class="abs" style="left:236.69999999999982px;top:347px;width:24px;height:24px;border-radius:4.500px;background:#fff;border:2.400px solid #777"></div>
<div class="abs" style="left:274.5999999999999px;top:343.3px;font-size:24px;line-height:32px;color:#636363;white-space:nowrap;letter-spacing:-0.94px">Výkres</div>
<div class="abs" style="left:0;top:397.5px;width:480px;height:2px;background:#dfe0e3"></div>
<div class="abs" style="left:28px;top:426.59999999999997px;font-size:24px;line-height:32px;font-weight:bold;color:#5a5a5a;white-space:nowrap;letter-spacing:0.11px">Možnosti</div>
<div class="abs" style="left:28.699999999999818px;top:480.6px;width:24px;height:24px;border-radius:4.500px;background:#0b74ff"></div><svg class="abs" style="left:28.699999999999818px;top:480.6px" width="24" height="24" viewBox="0 0 24 24"><path d="M4.700 12.400 L9.800 17.300 L19.200 5.600" fill="none" stroke="#fff" stroke-width="3.300"/></svg>
<div class="abs" style="left:65.09999999999991px;top:477.00000000000006px;font-size:24px;line-height:32px;color:#636363;white-space:nowrap;letter-spacing:-0.08px">Šipky připojení</div>
<div class="abs" style="left:28.699999999999818px;top:528.5px;width:24px;height:24px;border-radius:4.500px;background:#0b74ff"></div><svg class="abs" style="left:28.699999999999818px;top:528.5px" width="24" height="24" viewBox="0 0 24 24"><path d="M4.700 12.400 L9.800 17.300 L19.200 5.600" fill="none" stroke="#fff" stroke-width="3.300"/></svg>
<div class="abs" style="left:65.09999999999991px;top:525.3px;font-size:24px;line-height:32px;color:#636363;white-space:nowrap;letter-spacing:0.03px">Body připojení</div>
<div class="abs" style="left:28.699999999999818px;top:576.5px;width:24px;height:24px;border-radius:4.500px;background:#0b74ff"></div><svg class="abs" style="left:28.699999999999818px;top:576.5px" width="24" height="24" viewBox="0 0 24 24"><path d="M4.700 12.400 L9.800 17.300 L19.200 5.600" fill="none" stroke="#fff" stroke-width="3.300"/></svg>
<div class="abs" style="left:65.09999999999991px;top:573.6999999999999px;font-size:24px;line-height:32px;color:#636363;white-space:nowrap;letter-spacing:-0.11px">Vodicí linky</div>
<div class="abs" style="left:0;top:627px;width:480px;height:2px;background:#dfe0e3"></div>
<div class="abs" style="left:28px;top:655.0px;font-size:24px;line-height:32px;font-weight:bold;color:#5a5a5a;white-space:nowrap;letter-spacing:-0.16px">Rozměry papíru</div>
<div class="abs" style="left:29px;top:699px;width:410px;height:39.500px;background:#ededed;border:2px solid #dcdcdc;border-radius:8px"></div>
<div class="abs" style="left:41px;top:701.8px;font-size:24px;line-height:32px;color:#000;white-space:nowrap">A4 (210 mm x 297 mm)</div>
<svg class="abs" style="left:411px;top:713px" width="20" height="13" viewBox="0 0 20 13"><path d="M2 2 L10 10 L18 2" fill="none" stroke="#000" stroke-width="3.200"/></svg>
<div class="abs" style="left:46.5px;top:762px;width:24px;height:24px;border-radius:12px;border:2.400px solid #0b74ff;background:#fff"></div><div class="abs" style="left:52px;top:767.5px;width:13px;height:13px;border-radius:6.500px;background:#0b74ff"></div>
<div class="abs" style="left:83.19999999999982px;top:763.9px;font-size:24px;line-height:32px;color:#636363;white-space:nowrap;letter-spacing:-0.56px">Na výšku</div>
<div class="abs" style="left:200px;top:762px;width:24px;height:24px;border-radius:12px;border:2.400px solid #777;background:#fff"></div>
<div class="abs" style="left:236.4000000000001px;top:763.9px;font-size:24px;line-height:32px;color:#636363;white-space:nowrap;letter-spacing:-0.51px">Na šířku</div>
<div class="abs" style="left:0;top:818.8px;width:480px;height:2px;background:#dfe0e3"></div>
<div class="abs" style="left:29px;top:845.2px;width:418.5px;height:37px;background:#ededed;border:2px solid #dcdcdc;border-radius:8px"></div><div class="abs" style="left:29px;top:846.9000000000001px;width:418.5px;text-align:center;font-size:24px;line-height:32px;color:#000;white-space:nowrap">Upravit data...</div>
<div class="abs" style="left:29px;top:887.5px;width:418.5px;height:36.5px;background:#ededed;border:2px solid #dcdcdc;border-radius:8px"></div><div class="abs" style="left:29px;top:890.5px;width:418.5px;text-align:center;font-size:24px;line-height:32px;color:#000;white-space:nowrap">Vymazat výchozí styl</div>
<div class="abs" style="left:0;top:945.3px;width:480px;height:2px;background:#dfe0e3"></div>
</div>
</body></html>
